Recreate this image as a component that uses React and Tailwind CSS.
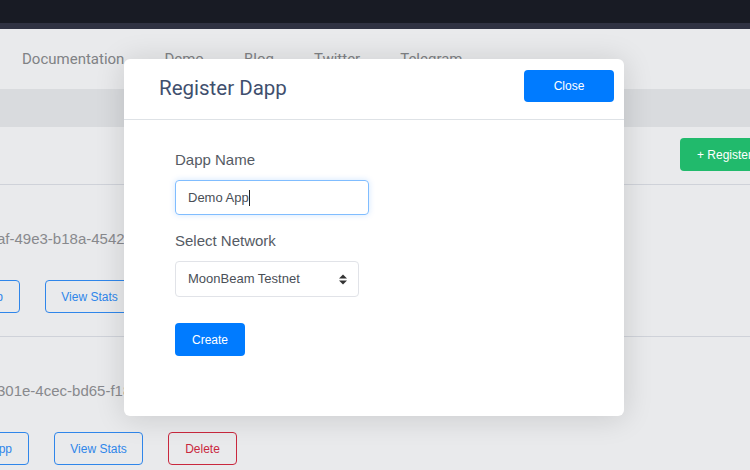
import { useState } from "react";

const navLinks = ["Documentation", "Demo", "Blog", "Twitter", "Telegram"];

const apps = [
  { id: "af-49e3-b18a-4542f0c1a9b3", offset: "-ml-[70px]" },
  { id: "301e-4cec-bd65-f18a2d7e0c44", offset: "-ml-[61px]" },
];

function AppRow({ app }) {
  return (
    <div className="h-[152px] border-b border-[#cfd2d9] pt-[45px]">
      <p className="text-[15px] text-[#88898d] leading-[18px] -ml-[3px] whitespace-nowrap">
        {app.id}
      </p>
      <div className="flex gap-[25px] mt-[32px]">
        <button
          className={`w-[90px] h-[33px] shrink-0 ${app.offset} border border-[#2f86ea] rounded text-[12px] text-[#2f86ea] text-right pr-[16px]`}
        >
          Edit App
        </button>
        <button className="w-[89px] h-[33px] shrink-0 border border-[#2f86ea] rounded text-[12px] text-[#2f86ea]">
          View Stats
        </button>
        <button className="w-[69px] h-[33px] shrink-0 border border-[#c9283e] rounded text-[12px] text-[#c9283e]">
          Delete
        </button>
      </div>
    </div>
  );
}

export default function App() {
  const [name, setName] = useState("Demo App");
  const [network, setNetwork] = useState("moonbeam");

  return (
    <div className="relative w-[750px] h-[470px] overflow-hidden bg-[#e9eaec] font-['Liberation_Sans',Arial,sans-serif]">
      <div className="h-[23px] bg-[#181b24]" />
      <div className="h-[6px] bg-[#2f3242]" />
      <nav className="h-[60px] flex items-center pl-[22px] gap-[40px] font-['Roboto',sans-serif] text-[15px] text-[#808285]">
        {navLinks.map((link) => (
          <span key={link}>{link}</span>
        ))}
      </nav>
      <div className="h-[38px] bg-[#d9dbde]" />

      <div>
        <div className="h-[58px] border-b border-[#cfd2d9] flex justify-end items-start pt-[11px]">
          <button className="w-[100px] h-[33px] -mr-[30px] bg-[#21ba6c] rounded text-white text-[12px] text-left pl-[17px]">
            + Register
          </button>
        </div>
        {apps.map((app) => (
          <AppRow key={app.id} app={app} />
        ))}
      </div>

      {/* modal */}
      <div className="absolute left-[124px] top-[59px] w-[500px] h-[357px] bg-white rounded-md shadow-[0_2px_30px_rgba(0,0,0,0.14)]">
        <div className="h-[61px] border-b border-[#dee2e6] flex items-center justify-between pl-[35px] pr-[10px]">
          <h2 className="font-['Roboto',sans-serif] text-[20.5px] text-[#3f4f6e] mt-[-1px]">
            Register Dapp
          </h2>
          <button className="w-[90px] h-[32px] bg-[#007bff] rounded text-white text-[12px] self-start mt-[11px]">
            Close
          </button>
        </div>
        <form className="pl-[51px] pt-[31px]" onSubmit={(e) => e.preventDefault()}>
          <label className="block text-[15px] text-[#555b64] leading-[18px]">
            Dapp Name
          </label>
          <div className="relative mt-[11px] w-[194px] h-[35px]">
            <input
              value={name}
              onChange={(e) => setName(e.target.value)}
              className="block w-full h-full px-[12px] rounded border border-[#80bdff] shadow-[0_0_6px_rgba(0,123,255,0.18)] text-[13px] text-[#4a4f57] outline-none"
            />
            {/* text caret */}
            <span className="absolute left-[74px] top-[10px] w-px h-[16px] bg-[#222]" />
          </div>
          <label className="block mt-[17px] text-[15px] text-[#555b64] leading-[18px]">
            Select Network
          </label>
          <div className="relative mt-[11px] w-[184px] h-[36px]">
            <select
              value={network}
              onChange={(e) => setNetwork(e.target.value)}
              className="appearance-none w-full h-full px-[12px] rounded border border-[#e1e3e8] bg-white text-[13px] text-[#4a4f57] outline-none"
            >
              <option value="moonbeam">MoonBeam Testnet</option>
            </select>
            <svg
              className="absolute right-[11px] top-[13px] pointer-events-none"
              width="10"
              height="11"
              viewBox="0 0 10 11"
            >
              <path d="M5 0.5 L9 4.5 H1 Z" fill="#333" />
              <path d="M5 10.5 L9 6.5 H1 Z" fill="#333" />
            </svg>
          </div>
          <button
            type="submit"
            className="mt-[26px] w-[70px] h-[33px] bg-[#007bff] rounded text-white text-[12px]"
          >
            Create
          </button>
        </form>
      </div>
    </div>
  );
}
